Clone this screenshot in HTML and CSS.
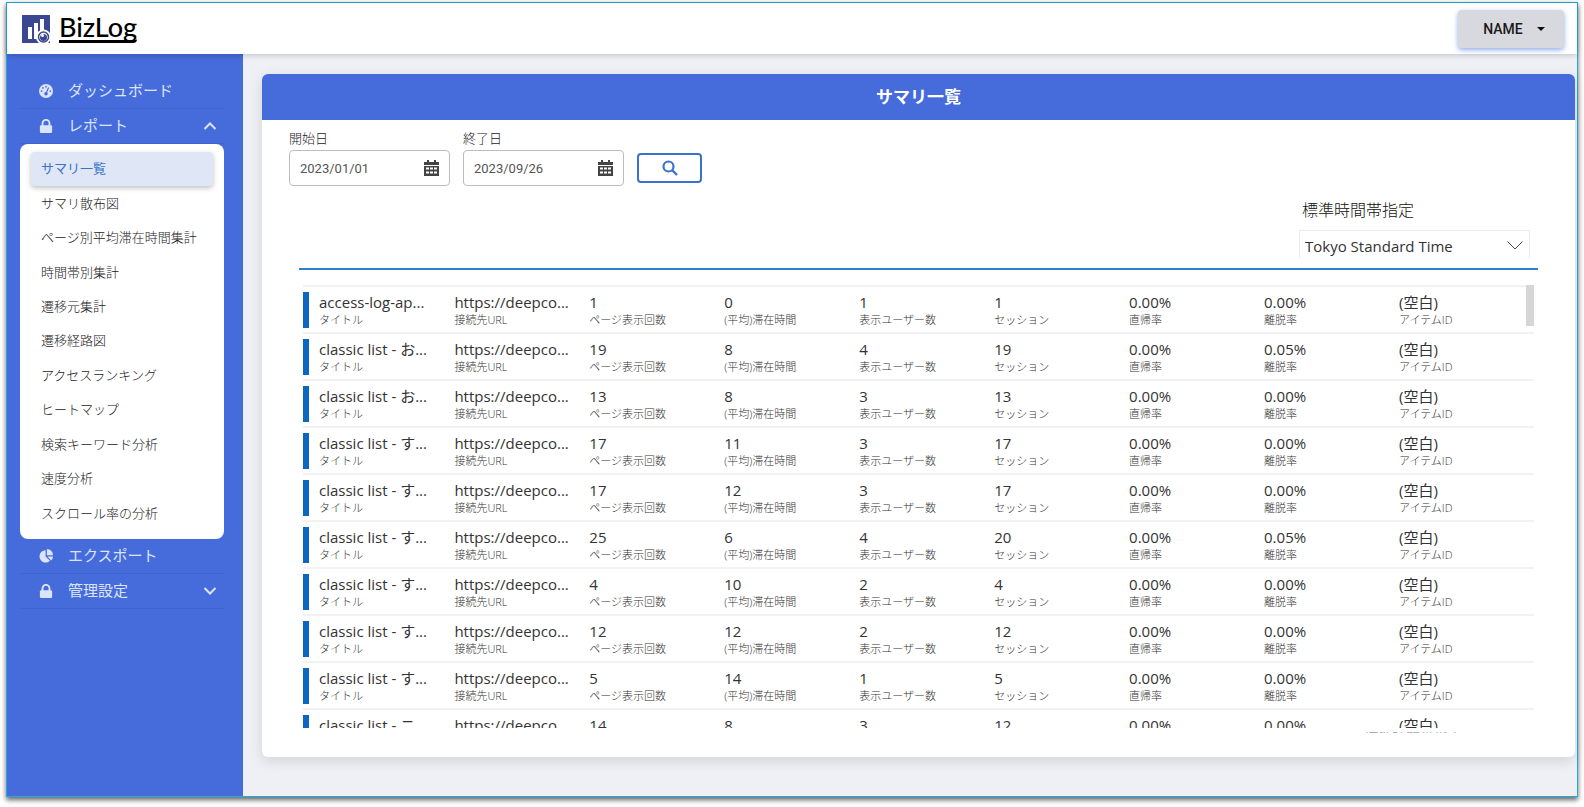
FILE: index.html
```html
<!DOCTYPE html>
<html lang="ja">
<head>
    <meta charset="UTF-8">
    <meta name="viewport" content="width=device-width, initial-scale=1.0">
    <title>BizLog</title>
    <link rel="stylesheet" href="styles.css">
</head>
<body>
    <div class="window">
        <header class="topbar">
            <a href="#" class="logo">
                <svg width="28" height="28" viewBox="0 0 28 28">
                    <rect width="28" height="28" fill="#3c4792"/>
                    <path d="M6 12h4v12H6zM12 8h4v16h-4zM18 4h4v12h-4z" fill="#fff"/>
                    <circle cx="21.500" cy="22" r="7.500" fill="#fff"/>
                    <circle cx="21.500" cy="22" r="5" fill="#fff" stroke="#3c4792" stroke-width="1.500"/>
                    <circle cx="21.500" cy="22.500" r="3.500" fill="#3c4792"/>
                    <circle cx="20.500" cy="20.500" r="1.500" fill="#fff"/>
                </svg>
                <span class="logo-text">BizLog</span>
            </a>
            <button type="button" class="user-button">NAME <span class="caret"></span></button>
        </header>

        <div class="layout">
            <nav class="sidebar">
                <a href="#" class="menu-item">
                    <svg class="menu-icon" viewBox="0 0 16 16"><circle cx="8" cy="8" r="8" fill="currentColor"/><g fill="#466bda"><circle cx="3" cy="8" r="1"/><circle cx="4.500" cy="4.500" r="1"/><circle cx="8" cy="3" r="1"/><circle cx="13" cy="8" r="1"/><circle cx="8" cy="11" r="2"/></g><path d="M8 11l3-7" stroke="#466bda" stroke-width="1.400"/></svg>
                    <span>ダッシュボード</span>
                </a>
                <a href="#" class="menu-item">
                    <svg class="menu-icon" viewBox="0 0 16 16"><path d="M4 8V5a4 4 0 0 1 8 0v3" fill="none" stroke="currentColor" stroke-width="2.200"/><rect x="1" y="7" width="14" height="9" rx="1.500" fill="currentColor"/></svg>
                    <span>レポート</span>
                    <svg class="chevron" viewBox="0 0 14 8"><path d="M1.500 7L7 1.500 12.500 7"/></svg>
                </a>
                <ul class="submenu">
                    <li><a href="#" class="active">サマリ一覧</a></li>
                    <li><a href="#">サマリ散布図</a></li>
                    <li><a href="#">ページ別平均滞在時間集計</a></li>
                    <li><a href="#">時間帯別集計</a></li>
                    <li><a href="#">遷移元集計</a></li>
                    <li><a href="#">遷移経路図</a></li>
                    <li><a href="#">アクセスランキング</a></li>
                    <li><a href="#">ヒートマップ</a></li>
                    <li><a href="#">検索キーワード分析</a></li>
                    <li><a href="#">速度分析</a></li>
                    <li><a href="#">スクロール率の分析</a></li>
                </ul>
                <a href="#" class="menu-item">
                    <svg class="menu-icon" viewBox="0 0 16 16"><path d="M7.500 1.500v7l5 5A7 7 0 1 1 7.500 1.500z" fill="currentColor"/><path d="M9 0a7 7 0 0 1 7 7H9zM9.500 8.500H16a7 7 0 0 1-2 4.500z" fill="currentColor"/></svg>
                    <span>エクスポート</span>
                </a>
                <a href="#" class="menu-item">
                    <svg class="menu-icon" viewBox="0 0 16 16"><path d="M4 8V5a4 4 0 0 1 8 0v3" fill="none" stroke="currentColor" stroke-width="2.200"/><rect x="1" y="7" width="14" height="9" rx="1.500" fill="currentColor"/></svg>
                    <span>管理設定</span>
                    <svg class="chevron" viewBox="0 0 14 8"><path d="M1.500 1L7 6.500 12.500 1"/></svg>
                </a>
            </nav>

            <main class="content">
                <section class="card">
                    <h1>サマリ一覧</h1>
                    <form class="filters">
                        <div class="field">
                            <label for="start">開始日</label>
                            <div class="date-box">
                                <input type="text" id="start" value="2023/01/01">
                                <svg class="calendar" viewBox="0 0 15 16"><path d="M3 0h2v2h5V0h2v2h3v3H0V2h3z"/><path fill-rule="evenodd" d="M0 6h15v10H0zM2 7.500v2h3v-2zm4 0v2h3v-2zm4 0v2h3v-2zm-8 4v2h3v-2zm4 0v2h3v-2zm4 0v2h3v-2z"/></svg>
                            </div>
                        </div>
                        <div class="field">
                            <label for="end">終了日</label>
                            <div class="date-box">
                                <input type="text" id="end" value="2023/09/26">
                                <svg class="calendar" viewBox="0 0 15 16"><path d="M3 0h2v2h5V0h2v2h3v3H0V2h3z"/><path fill-rule="evenodd" d="M0 6h15v10H0zM2 7.500v2h3v-2zm4 0v2h3v-2zm4 0v2h3v-2zm-8 4v2h3v-2zm4 0v2h3v-2zm4 0v2h3v-2z"/></svg>
                            </div>
                        </div>
                        <button type="button" class="search-button" aria-label="検索">
                            <svg width="16" height="16" viewBox="0 0 16 16"><circle cx="6.500" cy="6.500" r="5" fill="none" stroke="currentColor" stroke-width="2.200"/><path d="M10 10l5 5" stroke="currentColor" stroke-width="2.400"/></svg>
                        </button>
                    </form>

                    <div class="report">
                        <div class="timezone">
                            <label for="tz">標準時間帯指定</label>
                            <div class="select-box">
                                <select id="tz">
                                    <option>Tokyo Standard Time</option>
                                </select>
                                <svg class="select-arrow" viewBox="0 0 16 9"><path d="M0.500 0.500L8 8l7.500-7.500"/></svg>
                            </div>
                        </div>
                        <div class="list">
                            <table>
                                <colgroup>
                                    <col class="col-title">
                                    <col span="8">
                                </colgroup>
                                <tbody id="rows"></tbody>
                            </table>
                            <div class="thumb"></div>
                        </div>
                        <div class="cut-title">標準時間帯指定</div>
                    </div>
                </section>
            </main>
        </div>
    </div>

    <script>
        const labels = ['タイトル', '接続先URL', 'ページ表示回数', '(平均)滞在時間', '表示ユーザー数', 'セッション', '直帰率', '離脱率', 'アイテムID'];
        const url = 'https://deepco...';
        const data = [
            ['access-log-ap...', url, 1, 0, 1, 1, '0.00%', '0.00%', '(空白)'],
            ['classic list - お...', url, 19, 8, 4, 19, '0.00%', '0.05%', '(空白)'],
            ['classic list - お...', url, 13, 8, 3, 13, '0.00%', '0.00%', '(空白)'],
            ['classic list - す...', url, 17, 11, 3, 17, '0.00%', '0.00%', '(空白)'],
            ['classic list - す...', url, 17, 12, 3, 17, '0.00%', '0.00%', '(空白)'],
            ['classic list - す...', url, 25, 6, 4, 20, '0.00%', '0.05%', '(空白)'],
            ['classic list - す...', url, 4, 10, 2, 4, '0.00%', '0.00%', '(空白)'],
            ['classic list - す...', url, 12, 12, 2, 12, '0.00%', '0.00%', '(空白)'],
            ['classic list - す...', url, 5, 14, 1, 5, '0.00%', '0.00%', '(空白)'],
            ['classic list - ニ...', url, 14, 8, 3, 12, '0.00%', '0.00%', '(空白)']
        ];

        let html = '';
        data.forEach(row => {
            html += '<tr>';
            row.forEach((value, i) => {
                html += `<td><div class="cell"><span class="value">${value}</span><span class="caption">${labels[i]}</span></div></td>`;
            });
            html += '</tr>';
        });
        document.getElementById('rows').innerHTML = html;
    </script>
</body>
</html>
```
FILE: styles.css
```css
* {
    box-sizing: border-box;
}
body {
    margin: 0;
    padding: 2px 6px 10px;
    min-height: 100vh;
    display: flex;
    font-family: Roboto, "Noto Sans CJK JP", sans-serif;
    background: #fff;
    overflow: hidden;
}
a {
    color: inherit;
    text-decoration: none;
}
.window {
    flex: 1;
    display: flex;
    flex-direction: column;
    border: 1px solid #1fa9e6;
    box-shadow: 0 3px 5px rgba(0,0,0,0.6);
    background: #eff0f5;
}
.topbar {
    position: relative;
    display: flex;
    align-items: center;
    justify-content: space-between;
    height: 51px;
    padding: 0 13px 0 15px;
    background: #fff;
    box-shadow: 0 1px 6px rgba(0,0,0,0.2);
}
.logo {
    display: flex;
    align-items: center;
    gap: 9px;
}
.logo-text {
    font-family: Lato, sans-serif;
    font-size: 27px;
    font-weight: 500;
    line-height: 25px;
    color: #000;
    padding-bottom: 1px;
    border-bottom: 3px solid #000;
    border-bottom-right-radius: 4px;
}
.user-button {
    display: flex;
    align-items: center;
    justify-content: center;
    gap: 14px;
    width: 106px;
    height: 38px;
    padding: 0 0 0 6px;
    border: none;
    border-radius: 4px;
    background: #d8d9de;
    box-shadow: 0 2px 5px rgba(70,120,220,0.6);
    font: 500 14px Roboto, sans-serif;
    color: #1a1a1a;
}
.caret {
    border: 4px solid transparent;
    border-top-color: #111;
    border-bottom: none;
}
.layout {
    flex: 1;
    display: flex;
}
.sidebar {
    width: 236px;
    padding: 20px 19px 0 13px;
    background: #466bda;
}
.menu-item {
    display: flex;
    align-items: center;
    height: 35px;
    padding: 0 7px 0 19px;
    border-bottom: 1px solid #4064cc;
    font-size: 15px;
    color: #dce4fa;
}
.menu-item span {
    padding-bottom: 3px;
}
.menu-icon {
    width: 14px;
    height: 14px;
    margin-right: 15px;
}
.chevron {
    width: 14px;
    height: 8px;
    margin-left: auto;
    fill: none;
    stroke: #dce4fa;
    stroke-width: 2;
}
.submenu {
    display: grid;
    grid-auto-rows: 1fr;
    min-height: 395px;
    margin: 0;
    padding: 8px 11px;
    list-style: none;
    background: #fff;
    border-radius: 8px;
    font-size: 13px;
    font-weight: 300;
    color: #222;
}
.submenu a {
    display: flex;
    align-items: center;
    height: 100%;
    padding: 0 10px 3px;
}
.submenu .active {
    background: #dfe6f6;
    color: #3b71ca;
    font-weight: 400;
    border-radius: 4px;
    box-shadow: 0 2px 5px rgba(0,0,0,0.25);
}
.content {
    flex: 1;
    min-width: 0;
    padding: 20px 2px 0 19px;
}
.card {
    background: #fff;
    border-radius: 6px;
    box-shadow: 0 4px 14px rgba(0,0,0,0.12);
}
.card h1 {
    margin: 0;
    height: 46px;
    line-height: 46px;
    text-align: center;
    font-size: 17px;
    font-weight: 700;
    color: #fff;
    background: #466bda;
    border-radius: 6px 6px 0 0;
}
.filters {
    display: flex;
    align-items: flex-end;
    gap: 13px;
    padding: 9px 27px 0;
}
.field label {
    display: block;
    line-height: 20px;
    margin-bottom: 1px;
    font-size: 13px;
    font-weight: 300;
    color: #222;
}
.date-box {
    display: flex;
    align-items: center;
    width: 161px;
    height: 36px;
    padding: 0 10px;
    border: 1px solid #bdbdbd;
    border-radius: 4px;
}
.date-box input {
    flex: 1;
    min-width: 0;
    padding: 0;
    border: none;
    background: none;
    font: 13px Roboto, sans-serif;
    color: #555;
}
.calendar {
    width: 15px;
    height: 16px;
    fill: #444;
}
.search-button {
    width: 65px;
    height: 30px;
    margin-bottom: 3px;
    padding: 0;
    display: flex;
    align-items: center;
    justify-content: center;
    border: 2px solid #3b71ca;
    border-radius: 4px;
    background: #fff;
    color: #3b71ca;
}
.report {
    padding: 13px 37px 24px;
}
.timezone {
    width: 231px;
    margin: 0 8px 0 auto;
}
.timezone label {
    display: block;
    line-height: 24px;
    padding: 0 3px;
    margin-bottom: 7px;
    font-size: 16px;
    font-weight: 300;
    color: #111;
}
.select-box {
    position: relative;
    display: flex;
    height: 28px;
    border: 1px solid #eaeaea;
    border-bottom: none;
}
.select-box select {
    flex: 1;
    padding: 3px 5px 0;
    border: none;
    appearance: none;
    background: none;
    font: 15px "Open Sans", sans-serif;
    color: #333;
}
.select-arrow {
    position: absolute;
    right: 6px;
    top: 10px;
    width: 16px;
    height: 9px;
    fill: none;
    stroke: #444;
    pointer-events: none;
}
.list {
    position: relative;
    height: 460px;
    margin-top: 10px;
    padding: 15px 4px 0;
    border-top: 2px solid #2f80ca;
    overflow: hidden;
}
table {
    width: 100%;
    table-layout: fixed;
    border-collapse: collapse;
}
.col-title {
    width: 12.3%;
}
tr {
    height: 47px;
}
td {
    padding: 0;
    vertical-align: top;
    border-top: 2px solid #f2f2f2;
}
.cell {
    height: 36px;
    margin-top: 5px;
    white-space: nowrap;
}
td:first-child .cell {
    padding-left: 10px;
    border-left: 6px solid #0c67c0;
}
.value {
    display: block;
    line-height: 20px;
    font-family: "Open Sans", "Noto Sans CJK JP", sans-serif;
    font-size: 15px;
    color: #333;
}
.caption {
    display: block;
    line-height: 15px;
    font-family: "Open Sans", "Noto Sans CJK JP", sans-serif;
    font-size: 11px;
    font-weight: 300;
    color: #333;
}
.thumb {
    position: absolute;
    top: 15px;
    right: 4px;
    width: 8px;
    height: 41px;
    background: #d6d6d6;
}
.cut-title {
    height: 1px;
    margin: 4px 74px 0 auto;
    width: 100px;
    overflow: hidden;
    font-size: 14px;
    line-height: 12px;
    color: #aaa;
}
```
